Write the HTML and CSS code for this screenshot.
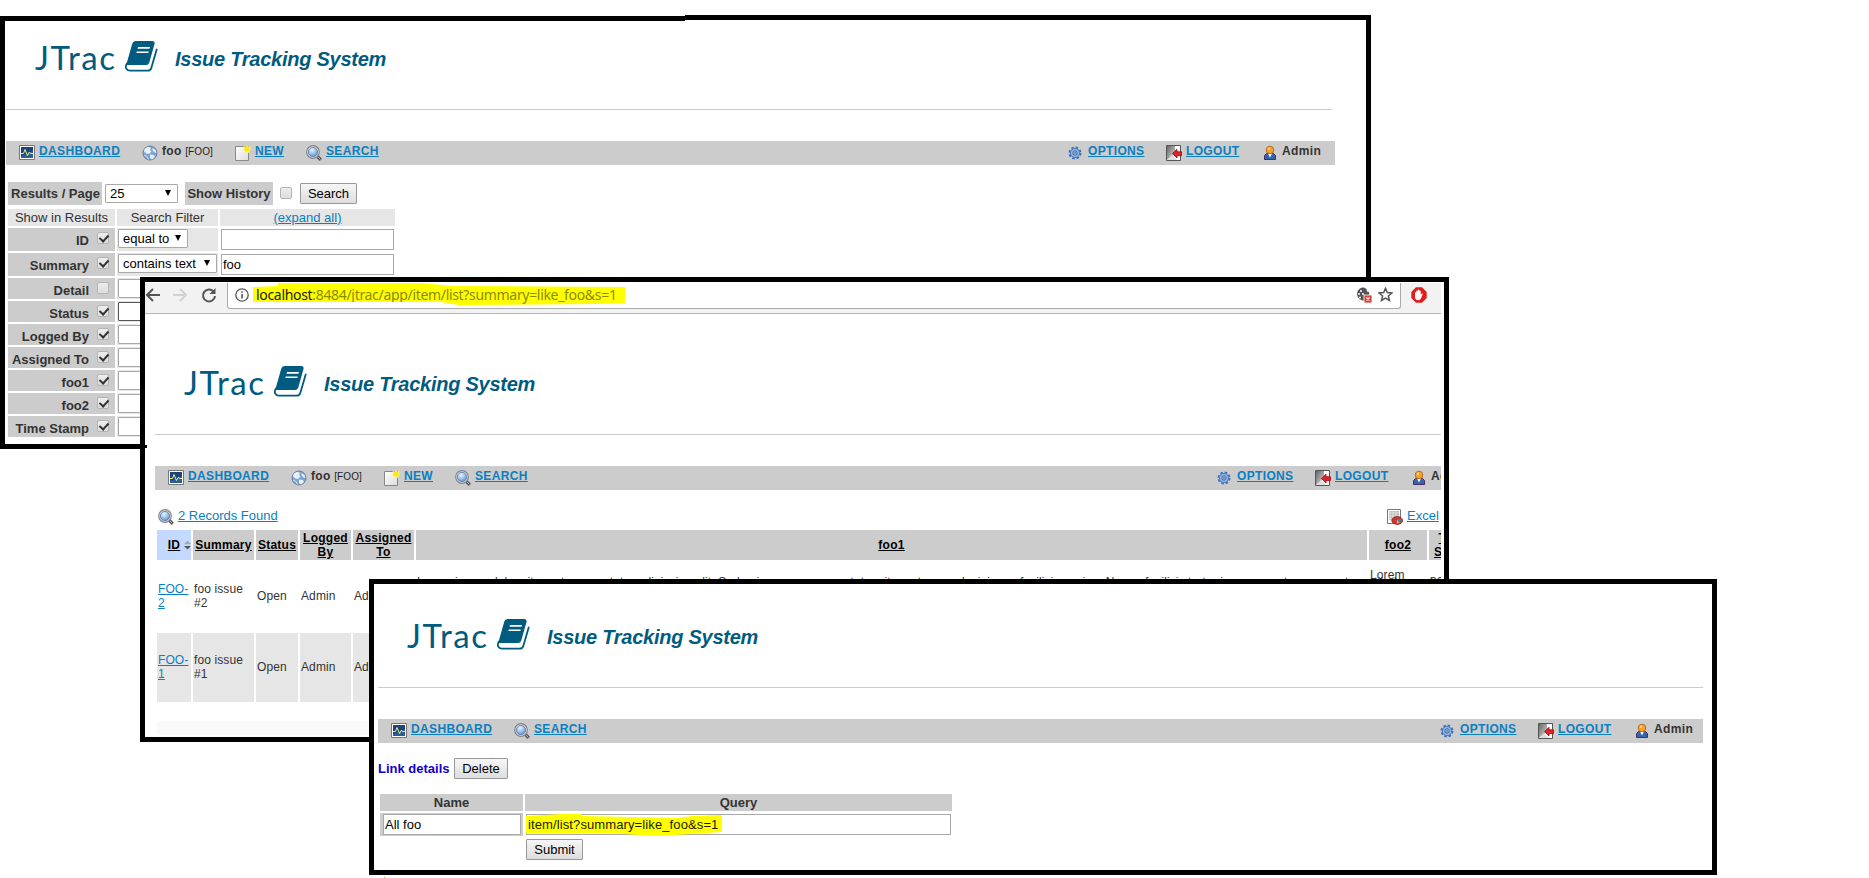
FILE: index.html
```html
<!DOCTYPE html>
<html lang="en">
<head>
<meta charset="utf-8">
<title>JTrac - Issue Tracking System</title>
<link rel="stylesheet" href="styles.css">
</head>
<body>
<svg class="defs" width="0" height="0">
  <defs>
    <linearGradient id="gDoor" x1="0" x2="1" y1="0" y2="1"><stop offset="0" stop-color="#666"/><stop offset="1" stop-color="#ddd"/></linearGradient>
    <linearGradient id="gPaper" x1="0" x2="1" y1="0" y2="1"><stop offset="0" stop-color="#fff"/><stop offset="1" stop-color="#ddd"/></linearGradient>
    <radialGradient id="gLens" cx=".4" cy=".3" r=".8"><stop offset="0" stop-color="#eaf4ff"/><stop offset="1" stop-color="#4f86c8"/></radialGradient>
    <symbol id="book" viewBox="0 0 33 31"><path d="M10.500 0H27q3.200 0 2.500 3L24.300 21.500q-.7 2.500-3.300 2.500H2.500q-1.300 0-.8-1.800L7.300 2.500Q8 0 10.500 0z" fill="#005b80"/><path d="M2 22.500q-2 3-.6 5.200Q2.600 29.700 5 29.700h17.500q3 0 3.800-2.700L31.700 8.500" fill="none" stroke="#005b80" stroke-width="1.800" stroke-linecap="round"/><path d="M13 6h12l-.5 1.700h-12zM11.800 10.400h12l-.5 1.700h-12z" fill="#fff"/></symbol>
    <symbol id="dash" viewBox="0 0 16 16"><path d="M.5.5h15v14H.5z" fill="#fff" stroke="#777"/><path d="M2 2h12v11H2z" fill="#2c5e96"/><path d="M2 2h12v4L2 11z" fill="#1d4377"/><path d="M2 8.500h2.500l1.500-4 2.500 6 2-3.500 1 1.500H14" fill="none" stroke="#e3f08c" stroke-width="1"/></symbol>
    <symbol id="globe" viewBox="0 0 16 16"><circle cx="8" cy="8" r="7" fill="#7ba3d6" stroke="#6b7f9e"/><path d="M3 3.500 6 1.800l3 1-1 2.200 1.500 1.500L7 9 4 8.500 1.800 6zM10.500 3l3 2 1 3-2-.5-2-2zM8 9.500l4 .5 1 2-3 2.500-2-1.500z" fill="#e8f0fa"/><path d="M2 10l3 1.500 1.500 3" fill="none" stroke="#cfdff2"/></symbol>
    <symbol id="new" viewBox="0 0 16 16"><path d="M.5 1.500h13v14H.5z" fill="url(#gPaper)" stroke="#888"/><path d="m12 0 1.200 1.800L15.500 1l-.3 2.400L16 5l-1.500 1-.3 2-2.200-.7-2 .7-.3-2L8 5l1-1.500L8.500 1l2.300.8z" fill="#fff36b"/><circle cx="12" cy="4" r="2.600" fill="#f8e814"/></symbol>
    <symbol id="lens" viewBox="0 0 16 16"><path d="m10.500 10.500 4.300 4.300" stroke="#555" stroke-width="3.200"/><path d="m11.200 11.200 3.200 3.200" stroke="#bbb" stroke-width="1"/><circle cx="7" cy="7" r="6.300" fill="#eee" stroke="#858585" stroke-width="1.200"/><circle cx="7" cy="7" r="4.700" fill="url(#gLens)" stroke="#4b78b5" stroke-width=".8"/></symbol>
    <symbol id="gear" viewBox="0 0 16 16"><circle cx="8" cy="8" r="5.300" fill="#8db4e6" stroke="#3e70b5" stroke-width="2.400" stroke-dasharray="2.400 1.760"/><circle cx="8" cy="8" r="4.600" fill="#8db4e6" stroke="#4f80c4"/><circle cx="8" cy="8" r="2.100" fill="#dce9f8" stroke="#2f5c9c"/><circle cx="8" cy="8" r=".8" fill="#222"/></symbol>
    <symbol id="exit" viewBox="0 0 16 16"><path d="M.5.5h14v15H.5z" fill="#fff" stroke="#555"/><path d="M1 1h8v8l-8 6z" fill="url(#gDoor)"/><path d="M1 15 6 10l5 5z" fill="#ddd"/><path d="m6.500 8.500 4.500-4.200v2.500h4.500v3.800H11V13z" fill="#e2222a" stroke="#a3121a" stroke-width=".9"/></symbol>
    <symbol id="user" viewBox="0 0 14 16"><path d="M1.500 14.500v-4l2-2h7l2 2v4z" fill="#3465ad" stroke="#4a2a68"/><path d="m5 8.500 2 4 2-4z" fill="#fff"/><circle cx="7" cy="5" r="3.800" fill="#f5a12c" stroke="#c46c12"/><circle cx="6" cy="3.800" r="1.300" fill="#ffd38a"/></symbol>
    <symbol id="excel" viewBox="0 0 16 16"><path d="M.5.500h13v14H.5z" fill="#fff" stroke="#777"/><path d="M2 2h10v9H2z" fill="#bbb"/><path d="M3 2v11M6 2v11M9 2v8M2 4h10M2 7h10M2 10h10" stroke="#eee" stroke-width=".7"/><ellipse cx="10.200" cy="11.500" rx="5.400" ry="3.900" fill="#c43a33" stroke="#8e1b18" stroke-width=".8"/><path d="M10.200 10.500 15 9.500q1 2.500-2 4z" fill="#3f7fa8"/><path d="m10.200 10.500 2.500 3.500-3 .5z" fill="#e0b04a"/></symbol>
    <symbol id="sort" viewBox="0 0 8 10"><path d="M4 0l4 4H0z" fill="#a0a7b5"/><path d="M4 10 0 6h8z" fill="#555"/></symbol>
  </defs>
</svg>

<section class="window win-search">
  <div class="page">
    <header class="brand"><span class="logo">JTrac</span><svg class="book"><use href="#book"/></svg><span class="tagline">Issue Tracking System</span></header>
    <nav class="bar">
      <span class="item dash"><svg><use href="#dash"/></svg><a>DASHBOARD</a></span>
      <span class="item space"><svg><use href="#globe"/></svg><b>foo <small>[FOO]</small></b></span>
      <span class="item new"><svg><use href="#new"/></svg><a>NEW</a></span>
      <span class="item find"><svg><use href="#lens"/></svg><a>SEARCH</a></span>
      <span class="item opts"><svg><use href="#gear"/></svg><a>OPTIONS</a></span>
      <span class="item exit"><svg><use href="#exit"/></svg><a>LOGOUT</a></span>
      <span class="item user"><svg><use href="#user"/></svg><b>Admin</b></span>
    </nav>
    <div class="controls">
      <b class="tag per">Results / Page</b><span class="select size">25</span><b class="tag hist">Show History</b><i class="check"></i><span class="button">Search</span>
    </div>
    <div class="filters">
      <div class="top">Show in Results</div><div class="top">Search Filter</div><div class="top"><a>(expand all)</a></div>
      <div class="name tall">ID<i class="check on"></i></div><div class="op"><span class="select eq">equal to</span></div><div class="val"><span class="input"></span></div>
      <div class="name tall">Summary<i class="check on"></i></div><div class="op"><span class="select">contains text</span></div><div class="val"><span class="input">foo</span></div>
      <div class="name">Detail<i class="check"></i></div><div class="op"><span class="select"></span></div><div></div>
      <div class="name">Status<i class="check on"></i></div><div class="op"><span class="select dark"></span></div><div></div>
      <div class="name">Logged By<i class="check on"></i></div><div class="op"><span class="select"></span></div><div></div>
      <div class="name">Assigned To<i class="check on"></i></div><div class="op"><span class="select"></span></div><div></div>
      <div class="name">foo1<i class="check on"></i></div><div class="op"><span class="select"></span></div><div></div>
      <div class="name">foo2<i class="check on"></i></div><div class="op"><span class="select"></span></div><div></div>
      <div class="name">Time Stamp<i class="check on"></i></div><div class="op"><span class="select"></span></div><div></div>
    </div>
  </div>
</section>
<i class="nub"></i><i class="step"></i>

<section class="window win-list">
  <div class="view">
    <div class="toolbar">
      <svg class="arrows" viewBox="0 0 82 30"><g fill="none" stroke-width="2"><path d="M15 12H2.500M8 6 2 12l6 6" stroke="#555"/><path d="M28 12h13M35 6l6 6-6 6" stroke="#d2d2d2"/><path d="M68.500 8.500A6 6 0 1 0 70 13" stroke="#555"/></g><path d="M70.500 5v6h-6z" fill="#555"/></svg>
      <div class="omnibox">
        <svg class="info" viewBox="0 0 14 14"><circle cx="7" cy="7" r="6.200" fill="none" stroke="#555" stroke-width="1.300"/><path d="M7 6v4.500M7 3.300v1.500" stroke="#555" stroke-width="1.600"/></svg>
        <span class="url"><em>localhost</em>:8484/jtrac/app/item/list?summary=like_foo&amp;s=1</span>
        <svg class="cookie" viewBox="0 0 16 16"><path d="M8 .5a6.500 6.500 0 1 0 5.500 9L13 5l-2-.5-.5-2.500z" fill="#555"/><g fill="#fff"><circle cx="5" cy="4" r="1"/><circle cx="3" cy="7" r="1"/><circle cx="7" cy="7" r="1"/><circle cx="4" cy="10.500" r="1"/></g><path d="M8 8h8v8H8z" fill="#db4437" stroke="#fff" stroke-width=".8"/><path d="m10.500 10.500 3 3m0-3-3 3" stroke="#fff" stroke-width="1.200"/></svg>
        <svg class="star" viewBox="0 0 14 14"><path d="m7 1.200 1.700 4 4.300.4-3.300 2.800 1 4.200L7 10.400l-3.700 2.200 1-4.200L1 5.600l4.300-.4z" fill="none" stroke="#555" stroke-width="1.400"/></svg>
      </div>
      <svg class="hand" viewBox="0 0 16 16"><path d="M5 .3h6L15.700 5v6L11 15.700H5L.3 11V5z" fill="#e01c1c"/><path d="M4 8V5.500q.7-.7 1.200 0V4q.8-1 1.500 0V3q.8-.8 1.500 0v.8q.8-.8 1.500 0V8l1-1.500q1-.5 1 .5l-1.500 4q-.7 2-3 2.200Q4 13 4 10z" fill="#fff"/></svg>
    </div>
    <div class="page">
      <header class="brand"><span class="logo">JTrac</span><svg class="book"><use href="#book"/></svg><span class="tagline">Issue Tracking System</span></header>
      <nav class="bar">
        <span class="item dash"><svg><use href="#dash"/></svg><a>DASHBOARD</a></span>
        <span class="item space"><svg><use href="#globe"/></svg><b>foo <small>[FOO]</small></b></span>
        <span class="item new"><svg><use href="#new"/></svg><a>NEW</a></span>
        <span class="item find"><svg><use href="#lens"/></svg><a>SEARCH</a></span>
        <span class="item opts"><svg><use href="#gear"/></svg><a>OPTIONS</a></span>
        <span class="item exit"><svg><use href="#exit"/></svg><a>LOGOUT</a></span>
        <span class="item user"><svg><use href="#user"/></svg><b>Admin</b></span>
      </nav>
      <div class="found"><svg><use href="#lens"/></svg><a class="count">2 Records Found</a><svg class="xls"><use href="#excel"/></svg><a>Excel</a></div>
      <div class="records">
        <div class="th sorted"><a>ID</a><svg><use href="#sort"/></svg></div><div class="th"><a>Summary</a></div><div class="th"><a>Status</a></div><div class="th"><a>Logged<br>By</a></div><div class="th"><a>Assigned<br>To</a></div><div class="th"><a>foo1</a></div><div class="th"><a>foo2</a></div><div class="th"><a>Time<br>Stamp</a></div>
        <div class="td"><a>FOO-<br>2</a></div><div class="td">foo issue<br>#2</div><div class="td">Open</div><div class="td">Admin</div><div class="td">Admin</div><div class="td text">Lorem ipsum dolor sit amet, consectetur adipiscing elit. Sed quis, cursus consectetur sit amet, purus lacinia, ac facilisis sapien. Nam a facilisis tortor in, posuere tempus erat, vestibulum vel metus in<br>viverra. Sed ut ornare<br>neque.</div><div class="td">Lorem<br>ipsum<br>dolor<br>sit</div><div class="td">2017-<br>01-17<br>10:22</div>
        <div class="td odd"><a>FOO-<br>1</a></div><div class="td odd">foo issue<br>#1</div><div class="td odd">Open</div><div class="td odd">Admin</div><div class="td odd">Admin</div><div class="td odd"></div><div class="td odd"></div><div class="td odd"></div>
      </div>
      <div class="foot"></div>
    </div>
  </div>
</section>

<section class="window win-link">
  <div class="page">
    <header class="brand"><span class="logo">JTrac</span><svg class="book"><use href="#book"/></svg><span class="tagline">Issue Tracking System</span></header>
    <nav class="bar">
      <span class="item dash"><svg><use href="#dash"/></svg><a>DASHBOARD</a></span>
      <span class="item find"><svg><use href="#lens"/></svg><a>SEARCH</a></span>
      <span class="item opts"><svg><use href="#gear"/></svg><a>OPTIONS</a></span>
      <span class="item exit"><svg><use href="#exit"/></svg><a>LOGOUT</a></span>
      <span class="item user"><svg><use href="#user"/></svg><b>Admin</b></span>
    </nav>
    <div class="details"><b>Link details</b><span class="button">Delete</span></div>
    <div class="link-form">
      <div class="cap">Name</div><div class="cap">Query</div>
      <div class="cell"><span class="input">All foo</span></div><div class="query"><span class="input"><mark>item/list?summary=like_foo&amp;s=1</mark></span></div>
      <div></div><div class="send"><span class="button">Submit</span></div>
    </div>
  </div>
</section>
<i class="speck"></i>
</body>
</html>
```

FILE: styles.css
```css
* { box-sizing: border-box; }
body { margin: 0; width: 1869px; height: 878px; position: relative; overflow: hidden; background: #fff; color: #333; font: 13px/17px "Liberation Sans", Arial, sans-serif; }
.defs { position: absolute; }
a { color: #0a7fc1; text-decoration: underline; }
svg { display: block; flex: none; }

/* Overlapping windows */
.window { position: absolute; border: 5px solid #000; background: #fff; overflow: hidden; }
.win-search { left: 0; top: 16px; width: 1371px; height: 433px; padding-left: 1px; }
.win-list { left: 140px; top: 277px; width: 1309px; height: 465px; }
.win-link { left: 369px; top: 579px; width: 1348px; height: 296px; padding: 15px 9px 0 4px; }
.nub { position: absolute; left: 140px; top: 445px; width: 7px; height: 3px; background: #000; z-index: 2; }
.step { position: absolute; left: 685px; top: 15px; width: 686px; height: 5px; background: #000; }
.step::after { content: ""; position: absolute; left: 0; top: 5px; width: 681px; height: 1px; background: #fff; }
.speck { position: absolute; left: 384px; top: 877px; width: 1px; height: 1px; background: #c9a227; }

/* Brand header */
.brand { display: flex; width: 1326px; height: 89px; padding: 20px 0 0 29px; border-bottom: 1px solid #ccc; }
.win-link .brand { width: auto; }
.logo { width: 90px; font: 33px/32px Lato, "Noto Sans", sans-serif; letter-spacing: 1.6px; color: #005b80; }
.book { width: 33px; height: 31px; margin-right: 17px; }
.tagline { font: italic bold 20px/24px "Liberation Sans", Arial, sans-serif; color: #005b80; padding-top: 6px; letter-spacing: -.25px; }

/* Navigation bar */
.bar { display: flex; height: 24px; margin-top: 31px; padding-left: 13px; background: #ccc; width: 1329px; overflow: hidden; }
.win-link .bar { width: 1325px; }
.item { display: flex; gap: 3px; padding-top: 3px; font: bold 12px/14px "Liberation Sans", Arial, sans-serif; letter-spacing: .35px; white-space: nowrap; flex: none; }
.item svg { width: 16px; height: 16px; margin-top: 1px; }
.dash { width: 123px; gap: 4px; }
.space { width: 93px; }
.space b { padding-left: 1px; letter-spacing: .3px; }
.space small { font-weight: normal; font-size: 10px; color: #222; letter-spacing: .1px; }
.new { width: 71px; gap: 4px; }
.find { gap: 4px; }
.opts { width: 99px; margin-left: auto; gap: 5px; }
.exit { width: 97px; gap: 4px; }
.user { width: 68px; margin-right: 4px; }
.win-link .user { margin-right: 0; }
.user svg { width: 14px; }
.user b { padding-left: 2px; }

/* Controls */
.select, .input, .button { display: block; color: #000; letter-spacing: 0; white-space: nowrap; }
.select { position: relative; border: 1px solid #a9a9a9; border-radius: 1px; background: #fff; height: 19px; width: 99px; padding-left: 4px; line-height: 17px; }
.select:not(:empty)::after { content: ""; position: absolute; right: 6px; top: 5px; border: 3px solid transparent; border-top: 6px solid #000; border-bottom: 0; }
.select.dark { border-color: #555; }
.input { border: 1px solid #a9a9a9; background: #fff; height: 21px; padding-left: 1px; line-height: 20px; }
.button { border: 1px solid #999; border-radius: 1px; background: linear-gradient(#f6f6f6, #ddd); height: 21px; line-height: 19px; text-align: center; }
.check { position: relative; display: block; width: 12px; height: 12px; border: 1px solid #b4b4b4; border-radius: 2px; background: linear-gradient(#ededed, #dedede); flex: none; }
.check.on::after { content: ""; position: absolute; left: 3px; top: 0; width: 4px; height: 7px; border: solid #333; border-width: 0 2px 2px 0; transform: rotate(42deg); }

/* Search form */
.controls { display: flex; align-items: flex-start; margin: 17px 0 0 2px; height: 27px; }
.tag { background: #ccc; height: 23px; line-height: 23px; text-align: center; }
.per { width: 94px; padding-left: 1px; }
.size { width: 73px; margin: 2px 7px 0 3px; }
.hist { width: 88px; }
.controls .check { margin: 5px 8px 0 7px; }
.controls .button { width: 57px; margin-top: 1px; }
.filters { display: grid; grid-template-columns: 107px 101px 175px; gap: 2px; margin-left: 2px; }
.top { height: 17px; background: #e6e6e6; text-align: center; }
.name { display: flex; justify-content: flex-end; height: 21px; padding: 3px 6px 0 0; gap: 8px; background: #ccc; font-weight: bold; line-height: 19px; }
.name.tall { height: 23px; }
.op { background: #e6e6e6; padding: 1px; }
.op .eq { width: 70px; }
.val { padding: 1px 1px 0; }
.name .check { margin-top: 1px; }

/* Browser view */
.view { width: 1296px; height: 455px; overflow: hidden; }
.toolbar { display: flex; height: 32px; border-top: 1px solid #fff; border-bottom: 1px solid #b6b6b6; background: #f2f2f2; }
.arrows { width: 82px; height: 30px; }
.omnibox { display: flex; align-items: center; width: 1174px; height: 26px; border: 1px solid #aaa; border-top: 0; border-radius: 0 0 3px 3px; background: #fff; }
.info { width: 14px; height: 14px; margin: 0 4px 2px 7px; }
.url { width: 372px; height: 22px; padding-left: 3px; line-height: 23px; margin-bottom: 3px; font-family: "Noto Sans", sans-serif; font-size: 14px; letter-spacing: -.32px; color: #8b8b00; background: #ff0; white-space: nowrap; clip-path: polygon(0 4px, 25px 3px, 25px 0, 168px 0, 200px 3px, 372px 4px, 372px 20px, 345px 21px, 206px 22px, 188px 19px, 0 19px); }
.url em { font-style: normal; color: #1a1a00; }
.cookie { width: 16px; height: 16px; margin: 0 6px 1px auto; }
.star { width: 15px; height: 15px; margin: 0 7px 2px 0; }
.hand { width: 16px; height: 16px; margin: 4px 0 0 10px; }
.view .page { width: 1329px; padding: 32px 0 0 10px; }
.found { display: flex; height: 40px; padding: 17px 0 0 3px; }
.found svg { width: 16px; height: 16px; margin: 2px 4px 0 0; }
.found a { line-height: 18px; }
.found .count { width: 105px; }
.found .xls { margin-left: 1104px; }
.records { display: grid; grid-template-columns: 34px 61px 42px 51px 61px 951px 58px 48px; grid-template-rows: 30px 69px 69px; gap: 2px; margin-left: 2px; width: 1320px; font-size: 12px; line-height: 14px; letter-spacing: .1px; }
.th { display: flex; align-items: center; justify-content: center; background: #ccc; text-align: center; font-weight: bold; letter-spacing: .25px; }
.th a { color: #000; }
.sorted { background: #c4d9ff; gap: 4px; padding-left: 11px; }
.sorted svg { width: 7px; height: 10px; }
.td { display: flex; align-items: center; padding: 0 0 2px 1px; white-space: nowrap; }
.td.text { display: block; padding-top: 13px; }
.odd { background: #e6e6e6; }
.foot { height: 14px; margin: 19px 0 0 2px; background: #fafafa; }

/* Link form */
.details { display: flex; margin-top: 15px; height: 36px; }
.details b { width: 76px; color: #10c; line-height: 22px; }
.details .button { width: 54px; }
.link-form { display: grid; grid-template-columns: 143px 427px; gap: 2px; margin-left: 2px; }
.cap { height: 17px; background: #ccc; font-weight: bold; text-align: center; }
.cell { height: 23px; padding: 1px 2px 1px 3px; background: #ccc; }
.query { padding: 1px; }
.query .input { padding: 0; }
mark { position: relative; z-index: 1; display: block; width: 196px; height: 22px; margin: -1px 0 0 -1px; padding-left: 2px; line-height: 22px; letter-spacing: .11px; background: #ff0; color: #1a1a00; clip-path: polygon(0 2px, 37px 0, 55px 0, 57px 2px, 150px 4px, 166px 2px, 196px 1px, 196px 18px, 166px 20px, 130px 22px, 80px 19px, 0 19px); }
.send { padding: 1px; }
.send .button { width: 57px; }
```
